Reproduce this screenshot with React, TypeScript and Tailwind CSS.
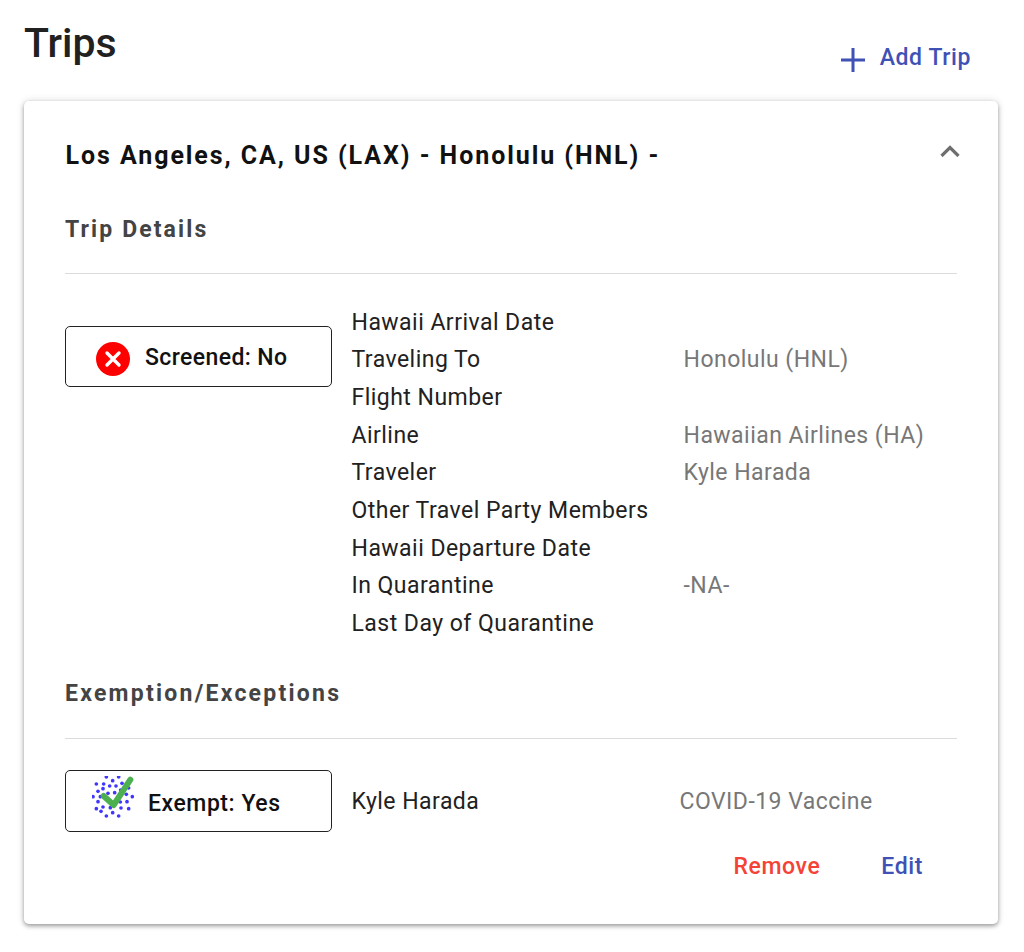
const rows: [string, string][] = [
  ["Hawaii Arrival Date", ""],
  ["Traveling To", "Honolulu (HNL)"],
  ["Flight Number", ""],
  ["Airline", "Hawaiian Airlines (HA)"],
  ["Traveler", "Kyle Harada"],
  ["Other Travel Party Members", ""],
  ["Hawaii Departure Date", ""],
  ["In Quarantine", "-NA-"],
  ["Last Day of Quarantine", ""],
];

const dots: [number, number][] = [
  [143, 53], [180, 53], [162, 64], [113, 74], [135, 74], [153, 80], [172, 80], [190, 72],
  [118, 96], [133, 88], [186, 92], [210, 86], [103, 112], [125, 112], [168, 100], [148, 102], [203, 105], [221, 112],
  [118, 127], [205, 127], [185, 128], [113, 148], [133, 143], [155, 145], [187, 146], [210, 148],
  [127, 156], [143, 170], [162, 160], [180, 170],
];

function ExemptIcon() {
  return (
    <svg width="42" height="42" viewBox="100 50 126 126" className="shrink-0 -mt-[8px]">
      {dots.map(([x, y], i) => (
        <circle key={i} cx={x} cy={y} r="5.5" fill="#3f35ff" />
      ))}
      <path d="M135 110 L165 137 L215 61" fill="none" stroke="#4caf50" strokeWidth="18" strokeLinecap="round" strokeLinejoin="round" />
    </svg>
  );
}

function ScreenedIcon() {
  return (
    <svg width="34" height="34" viewBox="0 0 34 34" className="shrink-0 mt-[5px]">
      <circle cx="17" cy="17" r="17" fill="#fe0000" />
      <path d="M11 11 L23 23 M23 11 L11 23" stroke="#fff" strokeWidth="3.4" strokeLinecap="round" />
    </svg>
  );
}

export default function App() {
  return (
    <div className="w-[1024px] h-[952px] overflow-hidden bg-white text-[#212121] font-['Roboto',sans-serif] px-6">
      <div className="flex justify-between items-start h-[101px]">
        <h1 className="text-[41px] leading-[48px] mt-[19px] font-medium">Trips</h1>
        <button className="flex items-center gap-[15px] mt-[43px] mr-[29px] text-[#3f51b5] text-[23px] leading-[30px] font-medium tracking-[0.6px]">
          <svg width="24" height="24" viewBox="0 0 24 24" fill="none" stroke="#3f51b5" strokeWidth="3" className="mt-[3px]">
            <path d="M12 0V24M0 12H24" />
          </svg>
          Add Trip
        </button>
      </div>
      <div className="w-[974px] h-[823px] bg-white rounded-[5px] shadow-[0_2px_4px_rgba(0,0,0,0.35),0_0_8px_rgba(0,0,0,0.12)] pl-[41px] pr-[41px] pt-[36px]">
        <div className="flex justify-between items-start h-[92px]">
          <div className="text-[25px] leading-[38px] font-bold tracking-[1.93px] text-[#111] pl-[0.5px]">Los Angeles, CA, US (LAX) - Honolulu (HNL) -</div>
          <svg width="20" height="12" viewBox="0 0 20 12" fill="none" stroke="#6e6e6e" strokeWidth="3.2" className="mt-[8px] mr-[-3px]">
            <path d="M1.5 11 L10 2.5 L18.5 11" />
          </svg>
        </div>
        <div className="text-[#444] text-[23px] leading-[30px] font-bold tracking-[2.1px] h-[44px] mt-[-14px]">Trip Details</div>
        <div className="border-t border-[#dcdcdc] mt-[14px]" />
        <div className="flex mt-[30px]">
          <div className="w-[267px] h-[61px] mt-[22px] border border-[#222] rounded-[5px] flex items-center pl-[30px] gap-[15px] shrink-0 text-[23px] font-medium tracking-[0.4px] text-[#111]">
            <ScreenedIcon />
            <span className="mt-[4px]">Screened: No</span>
          </div>
          <div className="ml-[19.5px] flex-1">
            {rows.map(([k, v]) => (
              <div key={k} className="flex h-[37.7px] items-center text-[23px] tracking-[0.47px]">
                <div className="w-[332px]">{k}</div>
                <div className="text-[#777]">{v}</div>
              </div>
            ))}
          </div>
        </div>
        <div className="text-[#444] text-[23px] leading-[30px] font-bold tracking-[2.25px] mt-[36px]">Exemption/Exceptions</div>
        <div className="border-t border-[#dcdcdc] mt-[29px]" />
        <div className="flex mt-[31px] items-start">
          <div className="w-[267px] h-[62px] border border-[#222] rounded-[5px] flex items-center pl-[26px] gap-[14px] shrink-0 text-[23px] font-medium tracking-[0.55px] text-[#111]">
            <ExemptIcon />
            <span className="mt-[6px]">Exempt: Yes</span>
          </div>
          <div className="ml-[19.5px] w-[328px] text-[23px] leading-[30px] mt-[17px] tracking-[0.47px]">Kyle Harada</div>
          <div className="text-[#777] text-[23px] leading-[30px] mt-[17px] tracking-[0.47px]">COVID-19 Vaccine</div>
        </div>
        <div className="flex justify-end gap-[61px] pr-[34px] mt-[20px] text-[23px] leading-[30px] font-medium tracking-[0.6px]">
          <button className="text-[#f44336]">Remove</button>
          <button className="text-[#3f51b5]">Edit</button>
        </div>
      </div>
    </div>
  );
}
